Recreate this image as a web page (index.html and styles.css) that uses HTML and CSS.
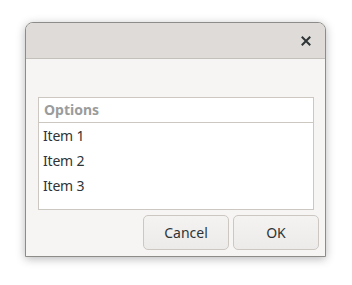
FILE: index.html
```html
<!DOCTYPE html>
<html>
<head>
  <meta charset="UTF-8">
  <title>Dialog</title>
  <link rel="stylesheet" href="styles.css">
</head>
<body>
  <div class="dialog">
    <div class="titlebar">
      <button class="close-button" aria-label="Close">
        <svg width="10" height="10" viewBox="0 0 10 10">
          <path d="M1.5 1.5 L8.5 8.5 M8.5 1.5 L1.5 8.5" stroke="#2e3436" stroke-width="2" stroke-linecap="square"/>
        </svg>
      </button>
    </div>

    <div class="content">
      <div class="list">
        <div class="list-header">Options</div>
        <div class="list-item">Item 1</div>
        <div class="list-item">Item 2</div>
        <div class="list-item">Item 3</div>
      </div>

      <div class="actions">
        <button class="action-button">Cancel</button>
        <button class="action-button">OK</button>
      </div>
    </div>
  </div>
</body>
</html>
```

FILE: styles.css
```css
:root {
  --text-color: #2e3436;
  --muted-text: #9a9c9c;
  --header-bg: #dedbd8;
  --window-bg: #f6f5f4;
  --border-color: #cdc7c2;
  --frame-color: #8e8c89;
}

* {
  box-sizing: border-box;
}

body {
  margin: 0;
  padding: 22px 25px;
  background: #ffffff;
  font-family: 'Noto Sans', 'DejaVu Sans', sans-serif;
  font-size: 14px;
  color: var(--text-color);
}

.dialog {
  width: 301px;
  height: 235px;
  display: flex;
  flex-direction: column;
  border: 1px solid var(--frame-color);
  border-radius: 8px 8px 0 0;
  background: var(--window-bg);
  box-shadow: 0 2px 10px rgba(0, 0, 0, 0.28);
  overflow: hidden;
}

.titlebar {
  height: 36px;
  display: flex;
  align-items: center;
  justify-content: flex-end;
  padding-right: 7px;
  background: var(--header-bg);
  border-bottom: 1px solid #c3bfbb;
}

.close-button {
  width: 24px;
  height: 24px;
  display: flex;
  align-items: center;
  justify-content: center;
  padding: 0;
  margin-top: 1px;
  background: none;
  border: none;
  cursor: pointer;
}

.content {
  flex: 1;
  display: flex;
  flex-direction: column;
  padding: 38px 6px 6px 12px;
}

.list {
  height: 113px;
  margin-right: 5px;
  background: #ffffff;
  border: 1px solid var(--border-color);
}

.list-header {
  height: 25px;
  padding: 0 5px;
  line-height: 24px;
  font-weight: 700;
  color: var(--muted-text);
  border-bottom: 1px solid var(--border-color);
}

.list-item {
  height: 25px;
  padding: 0 4px;
  line-height: 25px;
  letter-spacing: -0.2px;
}

.actions {
  display: flex;
  justify-content: flex-end;
  gap: 4px;
  margin-top: 5px;
}

.action-button {
  width: 86px;
  height: 35px;
  font-family: inherit;
  font-size: 14px;
  color: var(--text-color);
  background: linear-gradient(#f4f3f2, #edebe9);
  border: 1px solid var(--border-color);
  border-radius: 5px;
  cursor: pointer;
}
```
